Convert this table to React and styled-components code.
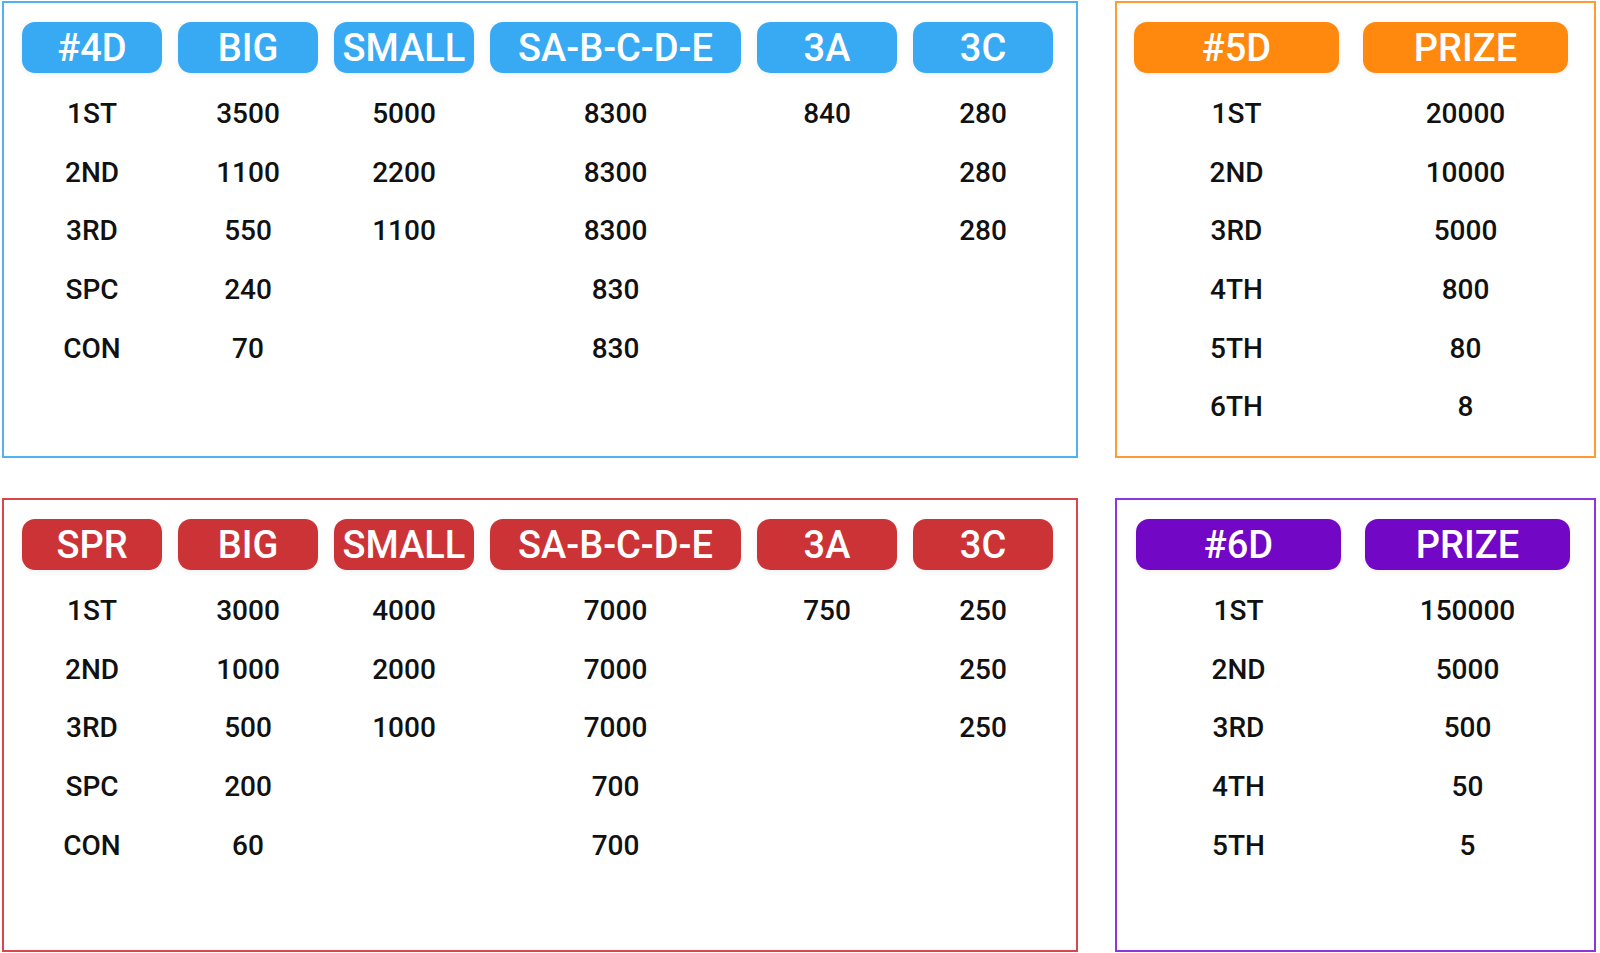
import React from "react";
import styled, { createGlobalStyle } from "styled-components";

const GlobalStyle = createGlobalStyle`
  body {
    margin: 0;
    background: #fff;
    font-family: Roboto, "Liberation Sans", sans-serif;
  }
`;

const themes = {
  blue: { badge: "#38aaf4", line: "#52b2f0" },
  orange: { badge: "#ff890e", line: "#ff9b34" },
  red: { badge: "#cc3337", line: "#d9474b" },
  purple: { badge: "#7307c6", line: "#8d35e0" },
};

const big = [
  ["#4D", "BIG", "SMALL", "SA-B-C-D-E", "3A", "3C"],
  ["1ST", "3500", "5000", "8300", "840", "280"],
  ["2ND", "1100", "2200", "8300", "", "280"],
  ["3RD", "550", "1100", "8300", "", "280"],
  ["SPC", "240", "", "830", "", ""],
  ["CON", "70", "", "830", "", ""],
];

const spr = [
  ["SPR", "BIG", "SMALL", "SA-B-C-D-E", "3A", "3C"],
  ["1ST", "3000", "4000", "7000", "750", "250"],
  ["2ND", "1000", "2000", "7000", "", "250"],
  ["3RD", "500", "1000", "7000", "", "250"],
  ["SPC", "200", "", "700", "", ""],
  ["CON", "60", "", "700", "", ""],
];

const fiveD = [
  ["#5D", "PRIZE"],
  ["1ST", "20000"],
  ["2ND", "10000"],
  ["3RD", "5000"],
  ["4TH", "800"],
  ["5TH", "80"],
  ["6TH", "8"],
];

const sixD = [
  ["#6D", "PRIZE"],
  ["1ST", "150000"],
  ["2ND", "5000"],
  ["3RD", "500"],
  ["4TH", "50"],
  ["5TH", "5"],
];

function PrizeTable({ rows, color, wide, pad }) {
  const [head, ...body] = rows;
  return (
    <Panel $line={themes[color].line} $pad={pad}>
      <Table $wide={wide}>
        {head.map((h) => (
          <Badge key={h} $bg={themes[color].badge}>
            {h}
          </Badge>
        ))}
        {body.map((row, i) =>
          row.map((cell, j) => <Cell key={i + "-" + j}>{cell}</Cell>)
        )}
      </Table>
    </Panel>
  );
}

export default function App() {
  return (
    <>
      <GlobalStyle />
      <Page>
        <PrizeTable rows={big} color="blue" wide pad={18} />
        <PrizeTable rows={fiveD} color="orange" pad={17} />
        <PrizeTable rows={spr} color="red" wide pad={18} />
        <PrizeTable rows={sixD} color="purple" pad={19} />
      </Page>
    </>
  );
}

const Page = styled.div`
  display: grid;
  grid-template-columns: 1076px 481px;
  grid-template-rows: 457px 454px;
  column-gap: 37px;
  row-gap: 40px;
  padding: 1px 0 0 2px;
`;

const Panel = styled.section`
  box-sizing: border-box;
  border: 2px solid ${(p) => p.$line};
  padding: 19px 0 0 ${(p) => p.$pad}px;
  background: #fff;
`;

const Table = styled.div`
  display: grid;
  grid-template-columns: ${(p) =>
    p.$wide ? "140px 140px 140px 251px 140px 140px" : "205px 205px"};
  column-gap: ${(p) => (p.$wide ? 16 : 24)}px;
  grid-template-rows: 62px;
  grid-auto-rows: 58.7px;
  align-items: center;
`;

const Badge = styled.div`
  align-self: start;
  box-sizing: border-box;
  height: 51px;
  padding-top: 2px;
  border-radius: 13px;
  background: ${(p) => p.$bg};
  color: #fff;
  font-size: 38px;
  font-weight: 500;
  line-height: 49px;
  text-align: center;
  white-space: nowrap;
  box-shadow: 0 2px 6px rgba(0, 0, 0, 0.06);
`;

const Cell = styled.div`
  text-align: center;
  font-size: 28px;
  font-weight: 500;
  color: #111;
`;
